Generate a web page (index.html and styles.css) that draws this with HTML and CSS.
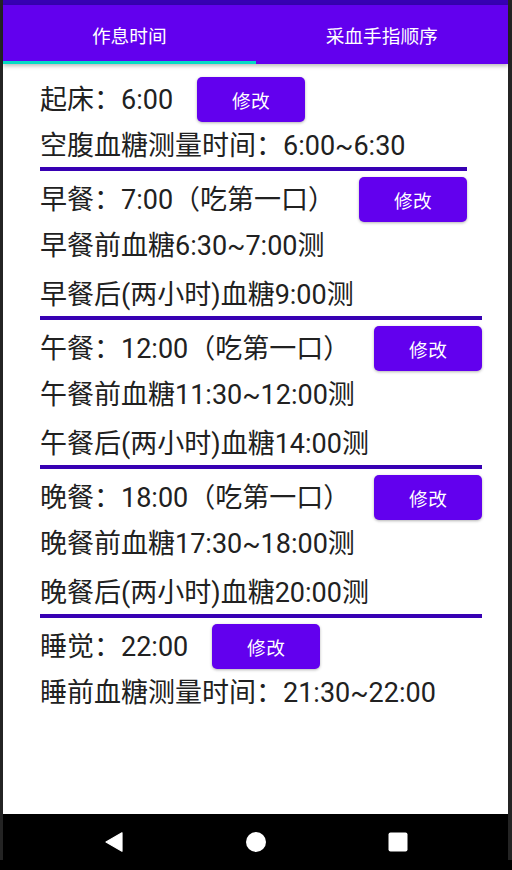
FILE: index.html
```html
<!DOCTYPE html>
<html lang="zh-CN">
<head>
<meta charset="utf-8">
<title>作息时间</title>
<link rel="stylesheet" href="styles.css">
</head>
<body>
<div class="screen">
  <div class="statusbar"></div>
  <div class="tabs">
    <div class="tab active">作息时间</div>
    <div class="tab">采血手指顺序</div>
  </div>
  <div class="content">
    <div class="section">
      <div class="header"><span class="label">起床：6:00</span><button class="btn">修改</button></div>
      <div class="row">空腹血糖测量时间：6:00~6:30</div>
      <div class="divider short"></div>
    </div>
    <div class="section">
      <div class="header"><span class="label">早餐：7:00（吃第一口）</span><button class="btn">修改</button></div>
      <div class="row">早餐前血糖6:30~7:00测</div>
      <div class="row gap">早餐后(两小时)血糖9:00测</div>
      <div class="divider"></div>
    </div>
    <div class="section">
      <div class="header"><span class="label">午餐：12:00（吃第一口）</span><button class="btn">修改</button></div>
      <div class="row">午餐前血糖11:30~12:00测</div>
      <div class="row gap">午餐后(两小时)血糖14:00测</div>
      <div class="divider"></div>
    </div>
    <div class="section">
      <div class="header"><span class="label">晚餐：18:00（吃第一口）</span><button class="btn">修改</button></div>
      <div class="row">晚餐前血糖17:30~18:00测</div>
      <div class="row gap">晚餐后(两小时)血糖20:00测</div>
      <div class="divider"></div>
    </div>
    <div class="section">
      <div class="header"><span class="label">睡觉：22:00</span><button class="btn">修改</button></div>
      <div class="row">睡前血糖测量时间：21:30~22:00</div>
    </div>
  </div>
  <div class="navbar">
    <span class="navicon"><svg width="20" height="20" viewBox="0 0 20 20"><polygon points="2,10 18,0.8 18,19.2" fill="#fff" stroke="#fff" stroke-width="1.2" stroke-linejoin="round"/></svg></span>
    <span class="navicon"><svg width="20" height="20" viewBox="0 0 20 20"><circle cx="10" cy="10" r="10" fill="#fff"/></svg></span>
    <span class="navicon"><svg width="20" height="20" viewBox="0 0 20 20"><rect x="0.5" y="0.5" width="19" height="19" rx="2" fill="#fff"/></svg></span>
  </div>
</div>
</body>
</html>
```

FILE: styles.css
```css
html, body {
  margin: 0;
  padding: 0;
}
body {
  width: 512px;
  height: 870px;
  overflow: hidden;
  background: linear-gradient(#242424, #242424) top left / 100% 860px no-repeat, #000;
  font-family: "Roboto", "Noto Sans CJK SC", sans-serif;
}
.screen {
  margin: 0 4px 0 3px;
  height: 870px;
  display: flex;
  flex-direction: column;
}
.statusbar {
  height: 5px;
  background: #3700B3;
}
.tabs {
  height: 59px;
  background: #6200EE;
  display: grid;
  grid-template-columns: 1fr 1fr;
  position: relative;
  z-index: 1;
  box-shadow: 0 2px 4px rgba(0, 0, 0, 0.28);
}
.tab {
  display: flex;
  align-items: center;
  justify-content: center;
  color: #fff;
  font-size: 18.7px;
  padding-top: 3px;
  border-bottom: 3px solid transparent;
}
.tab.active {
  border-bottom-color: #03DAC5;
}
.content {
  flex: 1;
  background: #fff;
  padding: 7px 0 0 37px;
  color: #212121;
  font-size: 27px;
}
.header {
  height: 56px;
  display: flex;
  align-items: center;
}
.label {
  white-space: nowrap;
  padding-bottom: 4px;
}
.btn {
  margin-left: 24px;
  width: 108px;
  height: 45px;
  border: none;
  border-radius: 5px;
  background: #6200EE;
  color: #fff;
  font-family: "Roboto", "Noto Sans CJK SC", sans-serif;
  font-size: 18.7px;
  letter-spacing: 0.5px;
  padding: 0;
  box-shadow: 0 1px 3px rgba(0, 0, 0, 0.3);
}
.row {
  margin-top: 2px;
  height: 34px;
  line-height: 34px;
  white-space: nowrap;
}
.row.gap {
  margin-top: 15px;
}
.divider {
  margin-top: 4px;
  height: 4px;
  width: 442px;
  background: #3700B3;
}
.divider.short {
  width: 427px;
}
.navbar {
  height: 56px;
  background: #000;
  display: flex;
  justify-content: center;
  align-items: center;
  gap: 102px;
}
.navicon {
  width: 40px;
  height: 20px;
  display: flex;
  justify-content: center;
}
```
